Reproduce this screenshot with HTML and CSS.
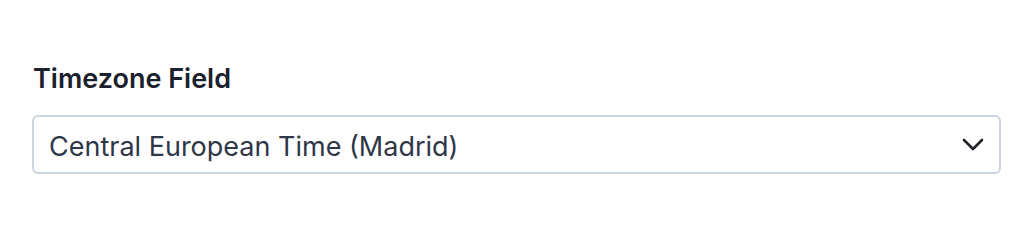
FILE: index.html
```html
<!DOCTYPE html>
<html lang="en">
<head>
  <meta charset="UTF-8" />
  <title>Timezone Field</title>
  <link rel="stylesheet" href="styles.css">
</head>
<body>
  <div class="field">
    <label class="field-label" for="tz">Timezone Field</label>
    <div class="select-wrap">
      <select id="tz" class="select">
        <option>Central European Time (Madrid)</option>
      </select>
      <svg class="chevron" width="22" height="13" viewBox="0 0 22 13">
        <path d="M2 2 L11 11 L20 2" fill="none" stroke="#1f2328" stroke-width="2.6" stroke-linecap="round" stroke-linejoin="round"/>
      </svg>
    </div>
  </div>
</body>
</html>
```

FILE: styles.css
```css
* {
  margin: 0;
  padding: 0;
  box-sizing: border-box;
}

body {
  background: #ffffff;
  font-family: Inter, "Noto Sans", sans-serif;
  padding: 63px 33px 0 32px;
}

.field {
  display: flex;
  flex-direction: column;
  gap: 20px;
}

.field-label {
  font-size: 27px;
  font-weight: 600;
  color: #1a202c;
  line-height: 32px;
  padding-left: 1px;
}

.select-wrap {
  position: relative;
}

.select {
  appearance: none;
  -webkit-appearance: none;
  width: 100%;
  height: 59px;
  padding: 4px 50px 0 15px;
  font-family: inherit;
  font-size: 27px;
  color: #2d3748;
  background: #ffffff;
  border: 2px solid #cbd5e0;
  border-radius: 6px;
}

.chevron {
  position: absolute;
  right: 17px;
  top: 23px;
  pointer-events: none;
}
```
